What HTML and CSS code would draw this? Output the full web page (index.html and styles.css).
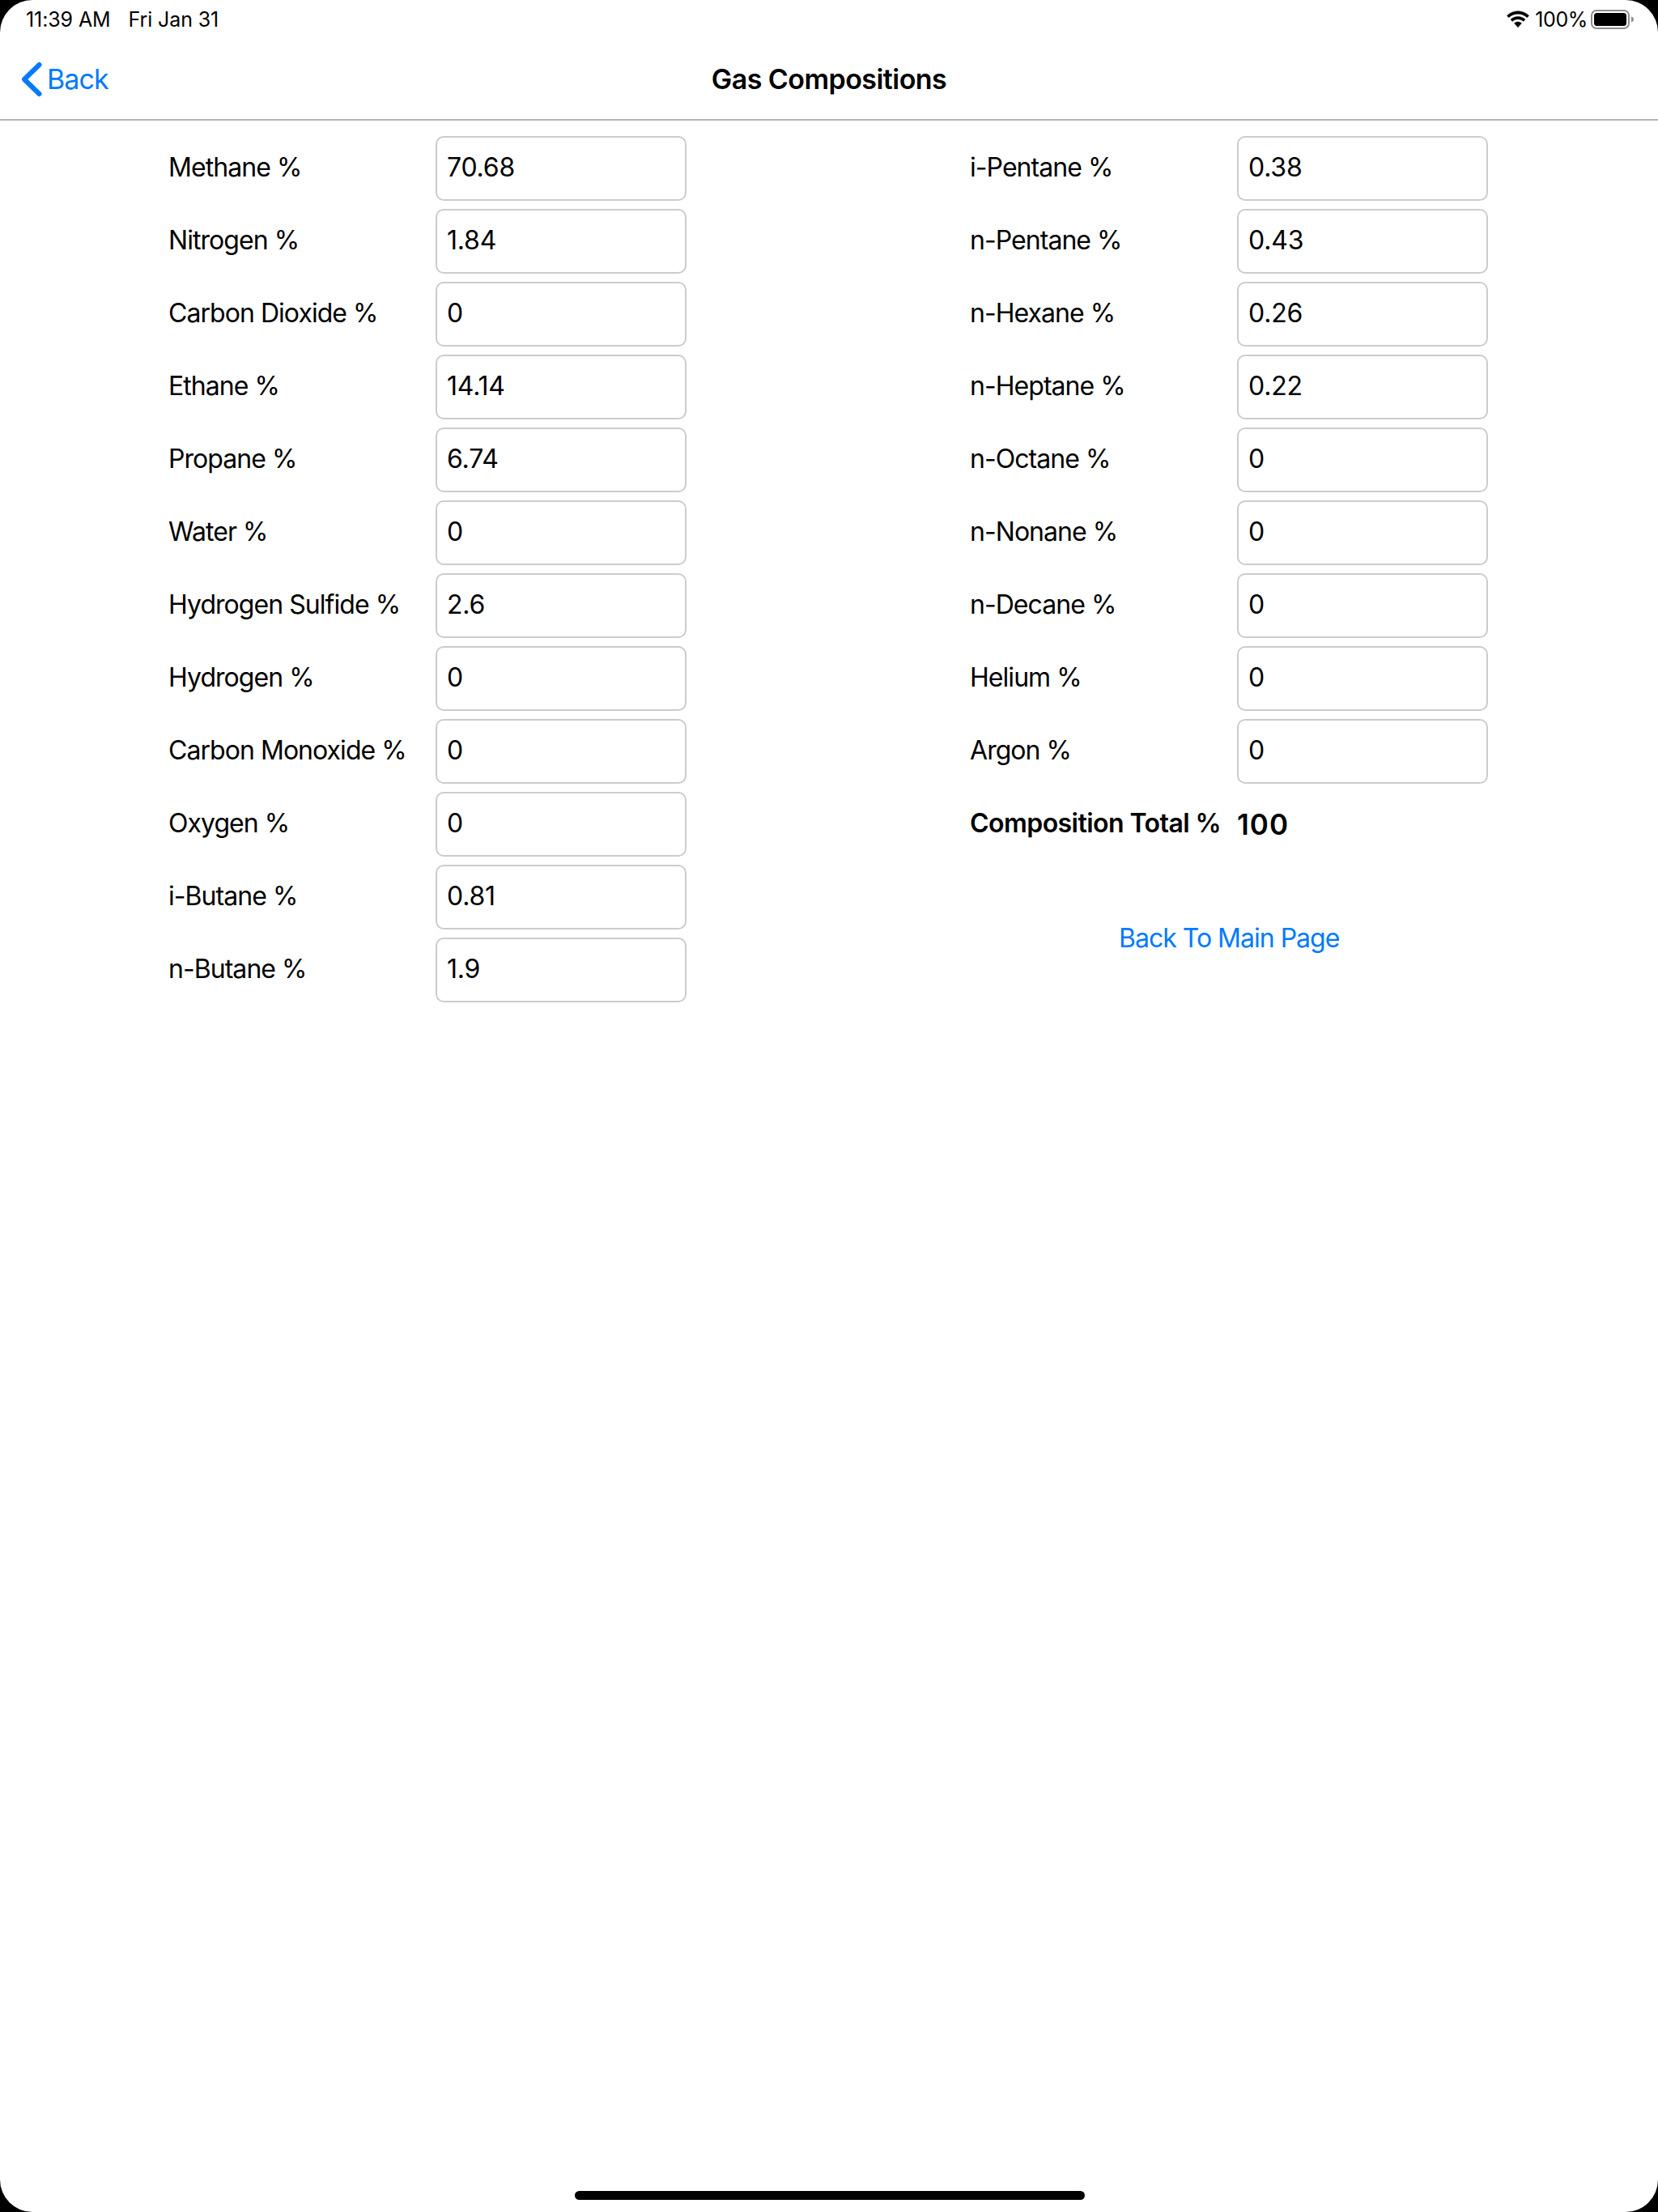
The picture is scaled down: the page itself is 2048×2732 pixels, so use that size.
FILE: index.html
```html
<!DOCTYPE html>
<html lang="en">
<head>
<meta charset="utf-8">
<title>Gas Compositions</title>
<link rel="stylesheet" href="styles.css">
</head>
<body>
<div class="screen">
  <header class="status">
    <div class="status-left"><span>11:39 AM</span><span>Fri Jan 31</span></div>
    <div class="status-right">
      <svg class="wifi" viewBox="0 0 28 20" aria-hidden="true"><path d="M14 3.600c3.900 0 7.400 1.500 10 4l1.900-2.100C22.700 2.400 18.500.5 14 .5S5.300 2.400 2.100 5.500L4 7.600c2.600-2.500 6.100-4 10-4z"/><path d="M14 9.300c2.300 0 4.400.9 6 2.400l1.900-2.100C19.800 7.600 17 6.400 14 6.400s-5.800 1.200-7.900 3.200L8 11.700c1.600-1.500 3.700-2.400 6-2.400z"/><path d="M14 12.200c-1.500 0-2.900.6-3.900 1.500l3.900 4.300 3.900-4.300c-1-.9-2.400-1.500-3.900-1.500z"/></svg>
      <span class="batt-pct">100%</span>
      <svg class="battery" viewBox="0 0 54 24" aria-hidden="true"><rect class="batt-shell" x="1" y="1" width="46" height="22" rx="6"/><rect x="4" y="4" width="40" height="16" rx="3.500"/><path class="batt-cap" d="M50 8.500c1.800.5 3 1.900 3 3.500s-1.200 3-3 3.500z"/></svg>
    </div>
  </header>
  <nav class="nav">
    <a class="nav-back">
      <svg class="chevron" viewBox="0 0 26 44" aria-hidden="true"><path d="M22.500 4 4 22l18.500 18"/></svg>
      <span>Back</span>
    </a>
    <h1 class="nav-title">Gas Compositions</h1>
  </nav>
  <main class="content">
    <section class="col">
      <div class="row"><label>Methane %</label><div class="field">70.68</div></div>
      <div class="row"><label>Nitrogen %</label><div class="field">1.84</div></div>
      <div class="row"><label>Carbon Dioxide %</label><div class="field">0</div></div>
      <div class="row"><label>Ethane %</label><div class="field">14.14</div></div>
      <div class="row"><label>Propane %</label><div class="field">6.74</div></div>
      <div class="row"><label>Water %</label><div class="field">0</div></div>
      <div class="row"><label>Hydrogen Sulfide %</label><div class="field">2.6</div></div>
      <div class="row"><label>Hydrogen %</label><div class="field">0</div></div>
      <div class="row"><label>Carbon Monoxide %</label><div class="field">0</div></div>
      <div class="row"><label>Oxygen %</label><div class="field">0</div></div>
      <div class="row"><label>i-Butane %</label><div class="field">0.81</div></div>
      <div class="row"><label>n-Butane %</label><div class="field">1.9</div></div>
    </section>
    <section class="col">
      <div class="row"><label>i-Pentane %</label><div class="field">0.38</div></div>
      <div class="row"><label>n-Pentane %</label><div class="field">0.43</div></div>
      <div class="row"><label>n-Hexane %</label><div class="field">0.26</div></div>
      <div class="row"><label>n-Heptane %</label><div class="field">0.22</div></div>
      <div class="row"><label>n-Octane %</label><div class="field">0</div></div>
      <div class="row"><label>n-Nonane %</label><div class="field">0</div></div>
      <div class="row"><label>n-Decane %</label><div class="field">0</div></div>
      <div class="row"><label>Helium %</label><div class="field">0</div></div>
      <div class="row"><label>Argon %</label><div class="field">0</div></div>
      <div class="row"><label class="strong">Composition Total %</label><div class="total">100</div></div>
      <a class="main-link">Back To Main Page</a>
    </section>
  </main>
  <div class="home-bar"></div>
</div>
</body>
</html>
```
FILE: styles.css
```css
* { box-sizing: border-box; }
html, body { margin: 0; padding: 0; background: #000; }
body {
  width: 2048px;
  height: 2732px;
  font-family: "Inter", "Liberation Sans", sans-serif;
  color: #000;
  overflow: hidden;
}
.screen {
  position: relative;
  width: 2048px;
  height: 2732px;
  background: #fff;
  border-radius: 40px;
  display: flex;
  flex-direction: column;
  overflow: hidden;
}
.status {
  height: 48px;
  flex: none;
  display: flex;
  justify-content: space-between;
  align-items: center;
  padding: 0 29px 0 32px;
  font-size: 25px;
  letter-spacing: -0.1px;
}
.status-left { display: flex; gap: 22px; }
.status-right { display: flex; align-items: center; gap: 5px; }
.batt-pct { letter-spacing: -0.4px; margin-right: -1px; }
.wifi { width: 32px; height: 23px; stroke: #000; stroke-width: 0.4; }
.battery { width: 54px; height: 24px; }
.batt-shell { fill: none; stroke: #8e8e8e; stroke-width: 2; }
.batt-cap { fill: #8e8e8e; }
.nav {
  height: 101px;
  flex: none;
  display: grid;
  grid-template-columns: 1fr auto 1fr;
  align-items: center;
  border-bottom: 2px solid #b2b2b2;
}
.nav-back {
  display: flex;
  align-items: center;
  gap: 6px;
  margin-left: 26px;
  color: #007aff;
  font-size: 34px;
  letter-spacing: -0.9px;
}
.chevron { width: 26px; height: 44px; }
.chevron path { fill: none; stroke: #007aff; stroke-width: 6; stroke-linecap: round; stroke-linejoin: round; }
.nav-title { grid-column: 2; margin: 0; font-size: 34px; font-weight: 600; line-height: 44px; letter-spacing: -0.55px; }
.content {
  flex: 1;
  display: flex;
  align-items: flex-start;
  gap: 259px;
  padding: 19px 0 0 208px;
}
.col { width: 731px; display: flex; flex-direction: column; gap: 10px; flex: none; }
.row { display: flex; align-items: center; height: 80px; }
.row label { width: 330px; flex: none; font-size: 32px; letter-spacing: -0.95px; padding-bottom: 3px; }
.row label.strong { font-weight: 600; letter-spacing: -0.55px; }
.field {
  width: 310px;
  height: 80px;
  border: 2px solid #ccc;
  border-radius: 10px;
  padding: 0 12px 3px;
  display: flex;
  align-items: center;
  font-size: 32px;
  letter-spacing: -0.2px;
}
.total { font-size: 35px; font-weight: 600; letter-spacing: 1px; padding-bottom: 1px; }
.main-link {
  align-self: flex-start;
  margin: 71px 0 0 184px;
  color: #007aff;
  font-size: 32px;
  letter-spacing: -1px;
}
.home-bar {
  position: absolute;
  left: 710px;
  top: 2706px;
  width: 630px;
  height: 11px;
  border-radius: 6px;
  background: #000;
}
```
